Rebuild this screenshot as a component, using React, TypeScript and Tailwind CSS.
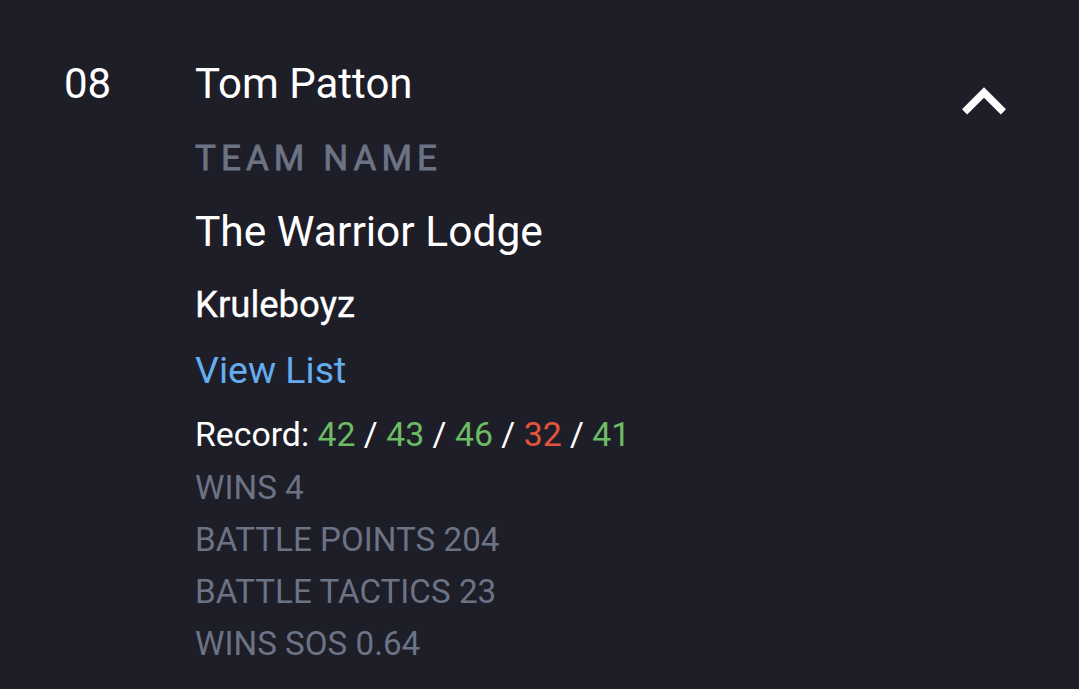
import React from "react";

export default function App() {
  return (
    <div
      className="w-[1079px] h-[689px] bg-[#1e1e28] text-white overflow-hidden"
      style={{ fontFamily: "Roboto, 'Liberation Sans', sans-serif" }}
    >
      <div className="flex pt-[60px] pl-[64px] pr-[51px]">
        <div className="w-[131px] text-[42px] leading-[48px]">08</div>
        <div className="flex-1 flex flex-col">
          <div className="text-[42px] leading-[48px]">Tom Patton</div>
          <div className="mt-[31px] text-[35px] leading-[40px] tracking-[0.145em] text-[#6b7385] [-webkit-text-stroke:0.8px_#6b7385]">
            TEAM NAME
          </div>
          <div className="mt-[29px] text-[42.5px] leading-[48px]">The Warrior Lodge</div>
          <div className="mt-[29px] text-[36.5px] leading-[40px] [-webkit-text-stroke:0.3px_#ffffff]">Kruleboyz</div>
          <div className="mt-[25px] text-[37.5px] leading-[40px] text-[#66acf0]">View List</div>
          <div className="mt-[25px] text-[33.8px] leading-[40px]">
            Record: <span className="text-[#6cbb65]">42</span> /{" "}
            <span className="text-[#6cbb65]">43</span> /{" "}
            <span className="text-[#6cbb65]">46</span> /{" "}
            <span className="text-[#e4533e]">32</span> /{" "}
            <span className="text-[#6cbb65]">41</span>
          </div>
          <div className="mt-[13px] flex flex-col gap-[12px] text-[33.2px] leading-[40px] text-[#6b7385]">
            <div>WINS 4</div>
            <div>BATTLE POINTS 204</div>
            <div>BATTLE TACTICS 23</div>
            <div>WINS SOS 0.64</div>
          </div>
        </div>
        <div className="-mt-[2px]">
          <svg width="88" height="88" viewBox="0 0 24 24" fill="white">
            <path d="M12 8l-6 6 1.41 1.41L12 10.83l4.59 4.58L18 14z" />
          </svg>
        </div>
      </div>
    </div>
  );
}
